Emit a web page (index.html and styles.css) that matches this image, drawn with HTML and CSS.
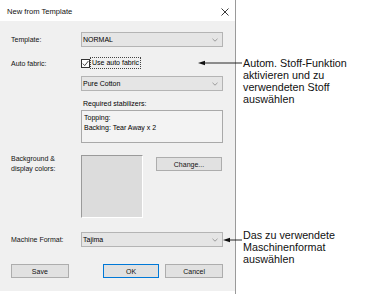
FILE: index.html
```html
<!DOCTYPE html>
<html>
<head>
<meta charset="utf-8">
<link rel="stylesheet" href="styles.css">
</head>
<body>
<div class="page">
  <div class="dialog">
    <div class="titlebar">
      <span class="title">New from Template</span>
      <svg class="close" width="8" height="8" viewBox="0 0 8 8"><path d="M0.5 0.5L7.5 7.5M7.5 0.5L0.5 7.5" stroke="#222" stroke-width="0.9" fill="none"/></svg>
    </div>
    <div class="body">
      <div class="row r-template">
        <span class="label">Template:</span>
        <div class="combo"><span>NORMAL</span><svg class="chev" width="6" height="4" viewBox="0 0 6 4"><path d="M0.5 0.8L3 3.2L5.5 0.8" stroke="#888" stroke-width="0.8" fill="none"/></svg></div>
      </div>
      <div class="row r-auto">
        <span class="label">Auto fabric:</span>
        <div class="check">
          <span class="box"><svg width="9" height="9" viewBox="0 0 9 9"><path d="M1.8 4.6L3.7 6.6L7.4 2" stroke="#333" stroke-width="0.9" fill="none"/></svg></span>
          <span class="focus">Use auto fabric</span>
        </div>
      </div>
      <div class="row r-fabric">
        <span></span>
        <div class="combo"><span>Pure Cotton</span><svg class="chev" width="6" height="4" viewBox="0 0 6 4"><path d="M0.5 0.8L3 3.2L5.5 0.8" stroke="#888" stroke-width="0.8" fill="none"/></svg></div>
      </div>
      <div class="row r-req">
        <span></span>
        <span class="sub">Required stabilizers:</span>
      </div>
      <div class="row r-stab">
        <span></span>
        <div class="stab">Topping:<br>Backing: Tear Away x 2</div>
      </div>
      <div class="row r-bg">
        <span class="label two">Background &amp;<br>display colors:</span>
        <div class="bgfield">
          <div class="swatch"></div>
          <div class="btn change">Change...</div>
        </div>
      </div>
      <div class="row r-machine">
        <span class="label">Machine Format:</span>
        <div class="combo"><span>Tajima</span><svg class="chev" width="6" height="4" viewBox="0 0 6 4"><path d="M0.5 0.8L3 3.2L5.5 0.8" stroke="#888" stroke-width="0.8" fill="none"/></svg></div>
      </div>
      <div class="buttons">
        <div class="btn save">Save</div>
        <div class="btn ok">OK</div>
        <div class="btn cancel">Cancel</div>
      </div>
    </div>
  </div>
  <div class="notes">
    <p class="note n1">Autom. Stoff-Funktion<br>aktivieren und zu<br>verwendeten Stoff<br>auswählen</p>
    <p class="note n2">Das zu verwendete<br>Maschinenformat<br>auswählen</p>
  </div>
  <svg class="arrow a1" width="45" height="6" viewBox="0 0 45 6"><path d="M5 3H44" stroke="#111" stroke-width="0.9"/><path d="M0 3L7 0.8L7 5.2Z" fill="#111"/></svg>
  <svg class="arrow a2" width="19" height="6" viewBox="0 0 19 6"><path d="M5 3H19" stroke="#111" stroke-width="0.9"/><path d="M0 3L7 0.8L7 5.2Z" fill="#111"/></svg>
</div>
</body>
</html>
```

FILE: styles.css
```css
* { box-sizing: border-box; }
html, body { margin: 0; padding: 0; background: #fff; }
body { font-family: "Liberation Sans", Arial, sans-serif; color: #000; }

.page { position: relative; display: flex; width: 371px; height: 294px; }

.dialog {
  width: 236px;
  height: 294px;
  border-right: 1px solid #9a9a9a;
  display: flex;
  flex-direction: column;
  font-size: 7px;
}

.titlebar {
  height: 21px;
  background: #fff;
  display: flex;
  align-items: center;
  justify-content: space-between;
  padding: 2px 6px 0 7px;
}
.title { font-size: 7.6px; color: #111; }

.body {
  height: 270px;
  background: #f0f0f0;
  padding: 0 12px 0 11px;
}

.row {
  display: grid;
  grid-template-columns: 70px 142px;
  align-items: center;
}
.label { color: #111; }
.two { line-height: 10px; align-self: start; }

.r-template { margin-top: 11px; }
.r-auto { margin-top: 10px; height: 12px; }
.r-fabric { margin-top: 7px; }
.r-req { margin-top: 7px; height: 10px; }
.r-stab { margin-top: 2px; }
.r-bg { margin-top: 12px; align-items: start; }
.r-bg .label { margin-top: -1px; }
.r-machine { margin-top: 14px; }

.combo {
  height: 15px;
  background: #e5e5e5;
  border: 1px solid #b4b4b4;
  display: flex;
  align-items: center;
  justify-content: space-between;
  padding: 0 4px 0 1px;
}
.chev { display: block; }

.check { display: flex; align-items: center; height: 12px; }
.box {
  width: 9px; height: 9px;
  border: 1px solid #333;
  background: #fff;
  display: flex;
}
.box svg { margin: -1px; }
.focus {
  border: 1px dotted #444;
  padding: 1px;
  line-height: 8px;
}

.sub { padding-left: 2px; }

.stab {
  height: 33px;
  border: 1px solid #a9a9a9;
  background: #f3f3f3;
  padding: 2px;
  line-height: 10px;
}

.bgfield { display: flex; align-items: flex-start; }
.swatch {
  width: 62px;
  height: 63px;
  background: #dcdcdc;
  border-top: 1px solid #9a9a9a;
  border-left: 1px solid #9a9a9a;
  border-right: 1px solid #fff;
  border-bottom: 1px solid #fff;
}
.btn {
  height: 14px;
  background: #e1e1e1;
  border: 1px solid #adadad;
  display: flex;
  align-items: center;
  justify-content: center;
  color: #111;
}
.change { width: 66px; margin-left: 13px; margin-top: 2px; }

.buttons { display: flex; margin-top: 17px; }
.save { width: 58px; }
.ok { width: 57px; margin-left: 34px; border-color: #0078d7; }
.cancel { width: 58px; margin-left: 6px; }

.notes {
  margin-left: 7px;
  display: flex;
  flex-direction: column;
  font-size: 10.75px;
  line-height: 12px;
  color: #111;
}
.note { margin: 0; }
.n1 { margin-top: 57px; }
.n2 { margin-top: 124px; }

.arrow { position: absolute; display: block; }
.a1 { left: 198px; top: 60px; }
.a2 { left: 223px; top: 237px; }
```
